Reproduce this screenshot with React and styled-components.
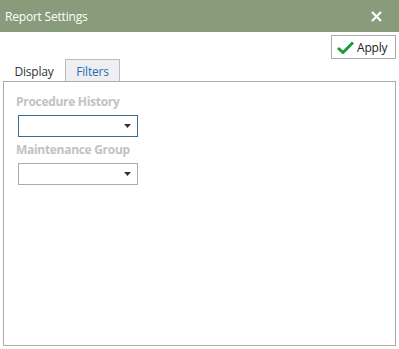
import React from "react";
import styled, { createGlobalStyle } from "styled-components";

const Global = createGlobalStyle`
  html, body { margin: 0; padding: 0; background: #fff; }
  body { font-family: "Open Sans", "Noto Sans", sans-serif; }
  * { box-sizing: border-box; }
`;

const Window = styled.div`
  width: 399px;
  height: 349px;
  display: flex;
  flex-direction: column;
  background: #fff;
`;

const TitleBar = styled.div`
  height: 32px;
  flex: none;
  background: #889c7c;
  color: #fff;
  display: flex;
  align-items: center;
  justify-content: space-between;
  padding: 0 17px 0 5px;
  font-size: 12px;
`;

const Title = styled.span`
  letter-spacing: -0.2px;
`;

const CloseButton = styled.button`
  border: 0;
  background: none;
  padding: 0;
  width: 11px;
  height: 11px;
  display: flex;
  cursor: pointer;
`;

const Toolbar = styled.div`
  display: flex;
  justify-content: flex-end;
  padding: 3px 3px 0 3px;
`;

const ApplyButton = styled.button`
  width: 65px;
  height: 24px;
  border: 1px solid #ababab;
  background: #fff;
  display: flex;
  align-items: center;
  gap: 3px;
  padding: 0 0 0 5px;
  font-family: inherit;
  font-size: 12px;
  color: #222;
  letter-spacing: -0.2px;
`;

const TabRow = styled.div`
  display: flex;
  align-items: flex-end;
  height: 22px;
  padding-left: 2px;
  gap: 2px;
  margin: 0 3px;
`;

const Tab = styled.div`
  height: 22px;
  display: flex;
  align-items: center;
  justify-content: center;
  font-size: 12px;
  letter-spacing: -0.2px;
  width: ${p => p.$width}px;
  color: ${p => (p.$active ? "#2b6cb0" : "#333")};
  background: ${p => (p.$active ? "#eeeff2" : "transparent")};
  border: 1px solid ${p => (p.$active ? "#bcbcbc" : "transparent")};
  border-bottom: 0;
  padding-top: 1px;
`;

const Panel = styled.div`
  flex: 1;
  margin: 0 3px 3px 3px;
  border: 1px solid #ababab;
  padding: 11px 0 0 12px;
  display: flex;
  flex-direction: column;
`;

const Label = styled.div`
  font-size: 12px;
  font-weight: 700;
  color: #c2c2c2;
  line-height: 18px;
  letter-spacing: -0.3px;
`;

const Select = styled.div`
  width: 120px;
  height: 22px;
  margin: 4px 0 4px 2px;
  border: 1px solid ${p => (p.$focused ? "#3b6d92" : "#ababab")};
  background: #fff;
  display: flex;
  align-items: center;
  justify-content: flex-end;
  padding-right: 6px;
`;

const Arrow = () => (
  <svg width="7" height="4" viewBox="0 0 7 4">
    <path d="M0 0H7L3.5 4Z" fill="#333" />
  </svg>
);

const Check = () => (
  <svg width="17" height="13" viewBox="0 0 17 13">
    <path d="M1 7L6 11.5L16 1.5" stroke="#1f9a38" strokeWidth="3" fill="none" />
  </svg>
);

const CloseIcon = () => (
  <svg width="11" height="11" viewBox="0 0 11 11">
    <path d="M1 1L10 10M10 1L1 10" stroke="#fff" strokeWidth="2.2" />
  </svg>
);

export default function App() {
  return (
    <>
      <Global />
      <Window>
        <TitleBar>
          <Title>Report Settings</Title>
          <CloseButton aria-label="Close"><CloseIcon /></CloseButton>
        </TitleBar>
        <Toolbar>
          <ApplyButton><Check />Apply</ApplyButton>
        </Toolbar>
        <TabRow>
          <Tab $width={58}>Display</Tab>
          <Tab $width={55} $active>Filters</Tab>
        </TabRow>
        <Panel>
          <Label>Procedure History</Label>
          <Select $focused><Arrow /></Select>
          <Label>Maintenance Group</Label>
          <Select><Arrow /></Select>
        </Panel>
      </Window>
    </>
  );
}
